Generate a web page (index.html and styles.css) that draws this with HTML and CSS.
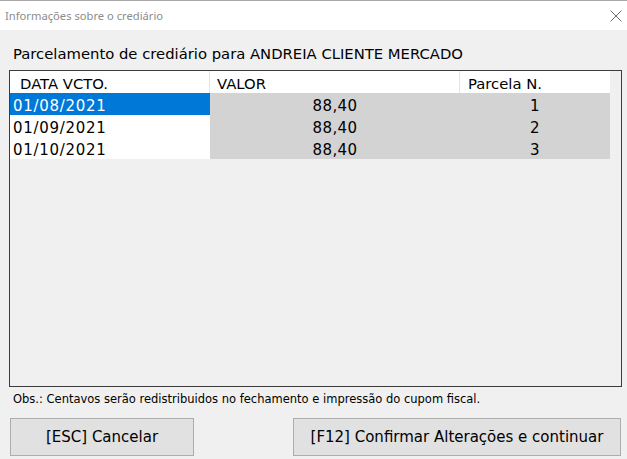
FILE: index.html
```html
<!DOCTYPE html>
<html lang="pt">
<head>
<meta charset="utf-8">
<link rel="stylesheet" href="styles.css">
</head>
<body>
<div class="window">
  <div class="titlebar">
    <span class="title">Informações sobre o crediário</span>
    <svg class="close" width="12" height="12" viewBox="0 0 12 12"><path d="M0.5 0.5 L11.5 11.5 M11.5 0.5 L0.5 11.5" stroke="#6e6e6e" stroke-width="1" fill="none"/></svg>
  </div>
  <div class="body">
    <div class="heading">Parcelamento de crediário para ANDREIA CLIENTE MERCADO</div>
    <div class="listview">
      <div class="grid">
        <div class="hd c1">DATA VCTO.</div>
        <div class="hd c2">VALOR</div>
        <div class="hd c3">Parcela N.</div>

        <div class="cell date sel">01/08/2021</div>
        <div class="cell num">88,40</div>
        <div class="cell num">1</div>

        <div class="cell date">01/09/2021</div>
        <div class="cell num">88,40</div>
        <div class="cell num">2</div>

        <div class="cell date">01/10/2021</div>
        <div class="cell num">88,40</div>
        <div class="cell num">3</div>
      </div>
    </div>
    <div class="obs">Obs.: Centavos serão redistribuidos no fechamento e impressão do cupom fiscal.</div>
    <div class="buttons">
      <button class="btn btn-cancel">[ESC] Cancelar</button>
      <button class="btn btn-ok">[F12] Confirmar Alterações e continuar</button>
    </div>
  </div>
</div>
</body>
</html>
```

FILE: styles.css
```css
html, body {
  margin: 0;
  padding: 0;
}
body {
  width: 627px;
  height: 459px;
  overflow: hidden;
  background: #f0f0f0;
  font-family: "DejaVu Sans", sans-serif;
  color: #000;
}
.window {
  display: flex;
  flex-direction: column;
  height: 459px;
}
.titlebar {
  height: 29px;
  border-top: 1px solid #a8a8a8;
  background: #fff;
  display: flex;
  align-items: center;
  justify-content: space-between;
  padding: 0 5px 0 5px;
}
.title {
  font-family: "Noto Sans", "Open Sans", sans-serif;
  font-size: 11.2px;
  color: #8c8c8c;
}
.close {
  display: block;
}
.body {
  display: flex;
  flex-direction: column;
  padding: 0 6px 0 9px;
}
.heading {
  height: 40px;
  display: flex;
  align-items: center;
  padding-left: 4px;
  padding-top: 6px;
  box-sizing: border-box;
  font-size: 14.8px;
}
.listview {
  width: 613px;
  height: 317px;
  box-sizing: border-box;
  border: 1px solid #3c3c3c;
  background: #f0f0f0;
}
.grid {
  display: grid;
  grid-template-columns: 200px 250px 150px;
  grid-auto-rows: 22px;
  width: 600px;
  font-size: 15px;
}
.hd {
  background: #fff;
  display: flex;
  align-items: center;
  padding-top: 3px;
  box-sizing: border-box;
  border-right: 1px solid #e5e5e5;
  font-size: 14.8px;
}
.hd.c1 { padding-left: 10px; }
.hd.c2 { padding-left: 7px; }
.hd.c3 { padding-left: 8px; border-right: none; }
.cell {
  display: flex;
  align-items: center;
  padding-top: 3px;
  box-sizing: border-box;
  background: #d3d3d3;
  letter-spacing: 0.4px;
}
.cell.date {
  background: #fff;
  padding-left: 3px;
  letter-spacing: 0.7px;
}
.cell.date.sel {
  background: #0078d7;
  color: #fff;
}
.cell.num {
  justify-content: center;
}
.obs {
  height: 24px;
  display: flex;
  align-items: center;
  padding-left: 4px;
  font-size: 11.5px;
}
.buttons {
  display: flex;
  justify-content: space-between;
  margin-top: 7px;
  padding-left: 1px;
}
.btn {
  height: 38px;
  box-sizing: border-box;
  background: #e1e1e1;
  border: 1px solid #adadad;
  font-family: "DejaVu Sans", sans-serif;
  font-size: 15px;
  color: #000;
  padding: 0;
  margin: 0;
}
.btn-cancel { width: 184px; }
.btn-ok { width: 328px; }
```
